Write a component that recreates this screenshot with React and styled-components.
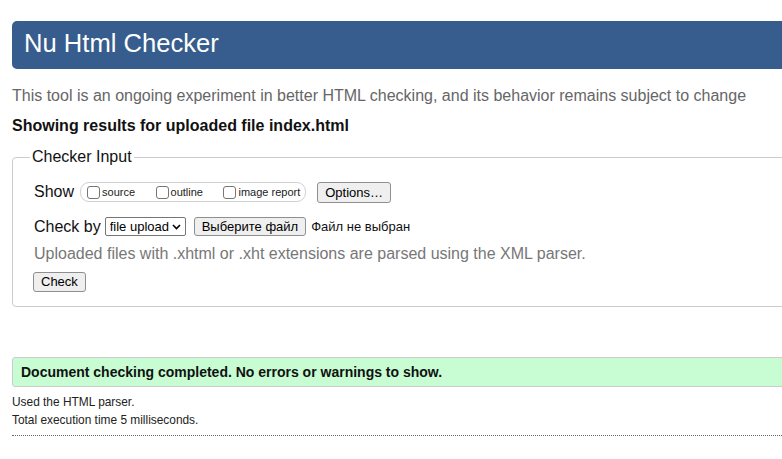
import React from "react";
import styled, { createGlobalStyle } from "styled-components";

const GlobalStyle = createGlobalStyle`
  html, body { margin: 0; padding: 0; background: #fff; overflow: hidden; }
  body { font-family: "Liberation Sans", Arial, Helvetica, sans-serif; color: #000; }
  * { box-sizing: border-box; }
`;

const Page = styled.div`
  width: 1100px;
  padding: 21px 0 0 12px;
`;

const Header = styled.h1`
  margin: 0;
  height: 48px;
  padding: 0 12px 2px;
  display: flex;
  align-items: center;
  background: #365d8d;
  border-radius: 5px;
  color: #fff;
  font-size: 25.6px;
  font-weight: normal;
  line-height: 1;
`;

const Intro = styled.p`
  margin: 18px 0 0;
  font-size: 16px;
  line-height: 18px;
  color: #666;
`;

const ResultsTitle = styled.h2`
  margin: 12px 0 0;
  font-size: 16px;
  line-height: 18px;
  font-weight: bold;
  color: #111;
`;

const Fieldset = styled.fieldset`
  margin: 13px 0 0;
  padding: 15px 0 14px 21px;
  border: 1px solid #ccc;
  border-radius: 4px;
  min-width: 0;
`;

const Legend = styled.legend`
  margin-left: -4px;
  padding: 0 2px;
  font-size: 16px;
  line-height: 18px;
  color: #111;
`;

const Row = styled.div`
  display: flex;
  align-items: center;
  height: ${(p) => p.$h}px;
  margin-top: ${(p) => p.$mt || 0}px;
  font-size: 16px;
  color: #111;
`;

const RowLabel = styled.span`
  margin-right: ${(p) => p.$mr}px;
`;

const ShowGroup = styled.div`
  display: flex;
  align-items: center;
  gap: 20.5px;
  height: 20px;
  padding: 0 5px 0 6px;
  border: 1px solid #d0d0d0;
  border-radius: 9px;
`;

const CheckItem = styled.label`
  display: flex;
  align-items: center;
  font-size: 11px;
  color: #222;
`;

const Box = styled.input`
  appearance: none;
  width: 13px;
  height: 13px;
  margin: 0 2px 0 0;
  border: 1px solid #767676;
  border-radius: 3px;
  background: #fff;
`;

const Button = styled.button`
  height: ${(p) => p.$h || 20}px;
  margin-left: ${(p) => p.$ml || 0}px;
  padding: 0 7px;
  border: 1px solid #8f8f8f;
  border-radius: 3px;
  background: #efefef;
  font-family: inherit;
  font-size: 13px;
  color: #000;
  line-height: 1;
`;

const SelectWrap = styled.span`
  position: relative;
  display: inline-flex;
`;

const Select = styled.select`
  appearance: none;
  width: 81px;
  height: 19px;
  padding: 0 16px 0 4px;
  border: 1px solid #767676;
  border-radius: 2px;
  background: #fff;
  font-family: inherit;
  font-size: 13px;
  color: #000;
`;

const Chevron = styled.svg`
  position: absolute;
  right: 5px;
  top: 7px;
  pointer-events: none;
`;

const FileName = styled.span`
  margin-left: 5px;
  font-size: 13px;
  color: #111;
`;

const Hint = styled.p`
  margin: 8px 0 0;
  font-size: 16px;
  line-height: 18px;
  color: #777;
`;

const Success = styled.div`
  margin-top: 50px;
  padding: 6px 8px;
  border: 1px solid #ccc;
  border-radius: 3px;
  background: #c8fdd3;
  font-size: 14px;
  line-height: 16px;
  font-weight: bold;
  color: #111;
`;

const Notes = styled.div`
  margin-top: 6px;
  font-size: 11.9px;
  line-height: 18px;
  color: #222;
`;

const Divider = styled.hr`
  margin: 6px 0 0;
  border: 0;
  border-top: 1px dotted #666;
`;

export default function App() {
  return (
    <Page>
      <GlobalStyle />
      <Header>Nu Html Checker</Header>
      <Intro>
        This tool is an ongoing experiment in better HTML checking, and its behavior remains subject to change
      </Intro>
      <ResultsTitle>Showing results for uploaded file index.html</ResultsTitle>
      <Fieldset>
        <Legend>Checker Input</Legend>
        <Row $h={22}>
          <RowLabel $mr={6}>Show</RowLabel>
          <ShowGroup>
            <CheckItem>
              <Box type="checkbox" />
              source
            </CheckItem>
            <CheckItem>
              <Box type="checkbox" />
              outline
            </CheckItem>
            <CheckItem>
              <Box type="checkbox" />
              image report
            </CheckItem>
          </ShowGroup>
          <Button $ml={11} $h={21}>Options…</Button>
        </Row>
        <Row $h={21} $mt={13}>
          <RowLabel $mr={4}>Check by</RowLabel>
          <SelectWrap>
            <Select defaultValue="file">
              <option value="file">file upload</option>
              <option value="address">address</option>
              <option value="text">text input</option>
            </Select>
            <Chevron width="9" height="6" viewBox="0 0 9 6">
              <path d="M1 1 L4.5 4.5 L8 1" fill="none" stroke="#000" strokeWidth="1.6" />
            </Chevron>
          </SelectWrap>
          <Button $ml={8} $h={19}>Выберите файл</Button>
          <FileName>Файл не выбран</FileName>
        </Row>
        <Hint>Uploaded files with .xhtml or .xht extensions are parsed using the XML parser.</Hint>
        <Row $h={21} $mt={8}>
          <Button $ml={-1} $h={20}>Check</Button>
        </Row>
      </Fieldset>
      <Success>Document checking completed. No errors or warnings to show.</Success>
      <Notes>
        <div>Used the HTML parser.</div>
        <div>Total execution time 5 milliseconds.</div>
      </Notes>
      <Divider />
    </Page>
  );
}
